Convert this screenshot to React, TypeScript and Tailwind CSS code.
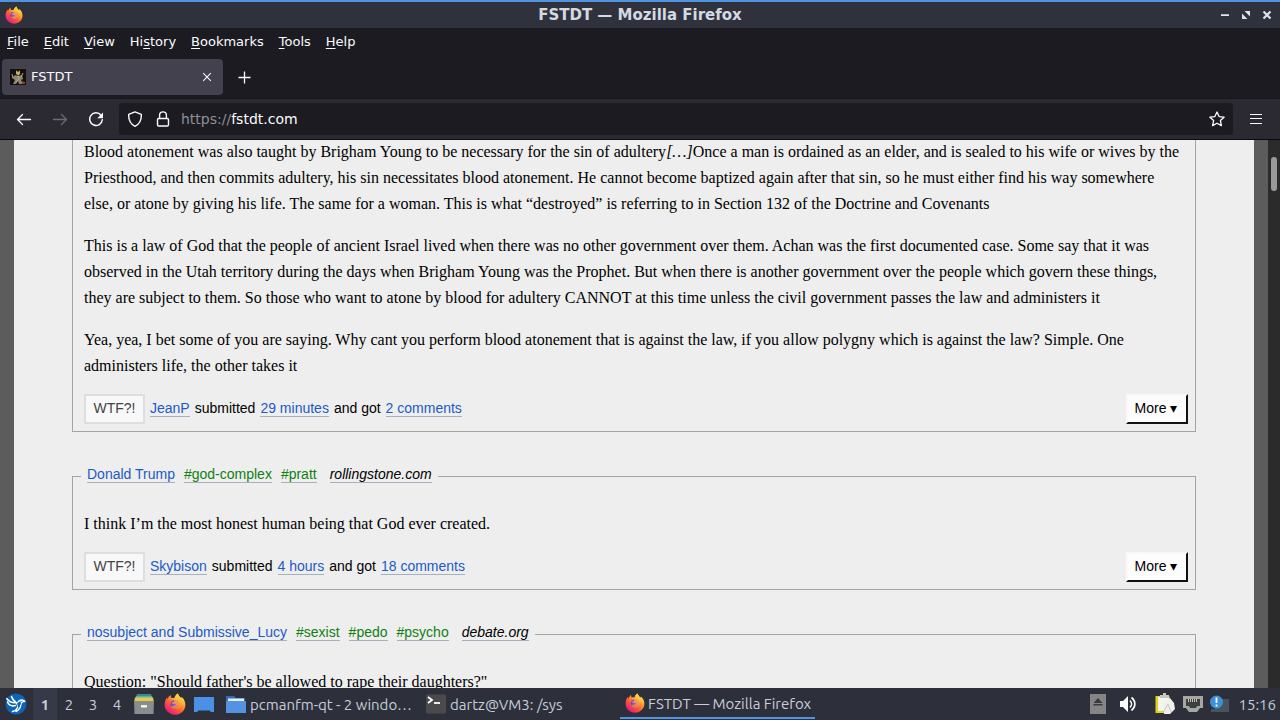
import { useId, type ReactNode } from "react";

type Tag = string;

interface Quote {
  author: string;
  tags: Tag[];
  source: string;
  body: ReactNode[];
  submitter: string;
  age: string;
  comments: string;
}

const quotes: Quote[] = [
  {
    author: "Donald Trump",
    tags: ["#god-complex", "#pratt"],
    source: "rollingstone.com",
    body: ["I think I’m the most honest human being that God ever created."],
    submitter: "Skybison",
    age: "4 hours",
    comments: "18 comments",
  },
];

const lastQuote = {
  author: "nosubject and Submissive_Lucy",
  tags: ["#sexist", "#pedo", "#psycho"],
  source: "debate.org",
  body: ["Question: \"Should father's be allowed to rape their daughters?\""],
};

function FirefoxIcon({ className }: { className: string }) {
  const id = useId();
  const outer = `${id}-outer`;
  const globe = `${id}-globe`;
  const flame = `${id}-flame`;
  return (
    <svg viewBox="0 0 24 24" className={className} aria-hidden="true">
      <defs>
        <linearGradient id={outer} x1="0.85" y1="0.1" x2="0.2" y2="0.95">
          <stop offset="0" stopColor="#fff44f" />
          <stop offset="0.3" stopColor="#ffa22b" />
          <stop offset="0.6" stopColor="#ff5a36" />
          <stop offset="1" stopColor="#e31587" />
        </linearGradient>
        <radialGradient id={globe} cx="0.5" cy="0.4" r="0.6">
          <stop offset="0" stopColor="#a05bf0" />
          <stop offset="1" stopColor="#5a3ac4" />
        </radialGradient>
        <linearGradient id={flame} x1="0.7" y1="0" x2="0.3" y2="1">
          <stop offset="0" stopColor="#ffe04a" />
          <stop offset="1" stopColor="#ff7a2e" />
        </linearGradient>
      </defs>
      <path
        d="M15.2 0.6c0.5 2.2 1.8 3.5 3.6 5 0.2-0.5 0.2-1 0.1-1.5 2.8 1.9 4.4 5.3 4.4 8.9 0 6-5 10.6-11.2 10.6S0.7 18.9 0.7 12.8c0-3.2 1.1-6.2 2.7-8.3 0 0.9 0.2 1.5 0.6 2 0.8-1.9 2-3.4 3.3-4.2-0.1 1.4 0.3 2.3 1 3.1 1.1-0.1 2.2 0 3.1 0.3 0.4-2 1.8-4.1 3.8-5.1z"
        fill={`url(#${outer})`}
      />
      <circle cx="12.2" cy="12.8" r="5.2" fill={`url(#${globe})`} />
      <path
        d="M15.2 0.6c0.5 2.2 2 3.6 3.5 5.3 1.9 2.2 2.3 5.2 1.1 7.800-0.200-1.400-0.700-2.400-1.500-3.200 0.500 4-1.900 7.200-5.400 7.400-3 0.200-5.300-1.700-5.600-4.200 1.300 0.900 2.600 0.800 3.700 0.200 1-0.600 1.600-0.700 2.200-0.800-0.300-1-1.400-1.500-2.900-1.300-0.900 0.100-1.800-0.200-2.100-0.900 1-1 2.200-1.200 3.100-1.900 0.200-0.600 0.100-0.900-0.200-1.100-1-0.500-1.900-0.900-2.800-2.500 1.100-0.100 2.200 0 3.100 0.300 0.400-2 1.800-4.100 3.800-5.100z"
        fill={`url(#${flame})`}
        opacity="0.85"
      />
    </svg>
  );
}

function TitleBar() {
  return (
    <header className="grid h-7 shrink-0 grid-cols-[1fr_auto_1fr] items-center border-t-2 border-[#5294e2] bg-[#2f323d] px-[5px]">
      <FirefoxIcon className="h-[18px] w-[18px] justify-self-start" />
      <h1 className="text-[15px] font-bold leading-5 text-[#d3dae3]">FSTDT — Mozilla Firefox</h1>
      <div className="flex items-center gap-1 justify-self-end text-[#dde2ee]">
        <button type="button" aria-label="Minimize" className="grid h-5 w-[17px] place-items-center">
          <svg viewBox="0 0 10 10" className="h-2.5 w-2.5">
            <path d="M1 4.200h8v1.800H1z" fill="currentColor" />
          </svg>
        </button>
        <button type="button" aria-label="Restore" className="grid h-5 w-[17px] place-items-center">
          <svg viewBox="0 0 10 10" className="h-2.5 w-2.5">
            <path d="M3.500 1H9v5.500zM1 3.500V9h5.500z" fill="currentColor" />
          </svg>
        </button>
        <button type="button" aria-label="Close window" className="grid h-5 w-[17px] place-items-center">
          <svg viewBox="0 0 10 10" className="h-2.5 w-2.5">
            <path d="M1.500 1.500l7 7M8.500 1.500l-7 7" stroke="currentColor" strokeWidth="2.200" />
          </svg>
        </button>
      </div>
    </header>
  );
}

const menus: [string, string, string][] = [
  ["", "F", "ile"],
  ["", "E", "dit"],
  ["", "V", "iew"],
  ["Hi", "s", "tory"],
  ["", "B", "ookmarks"],
  ["", "T", "ools"],
  ["", "H", "elp"],
];

function MenuBar() {
  return (
    <nav className="flex h-[27px] shrink-0 items-center gap-[15px] bg-[#1c1b22] pl-[7px] text-[13px] text-[#fbfbfe]">
      {menus.map(([before, key, after]) => (
        <button type="button" key={key + after}>
          {before}
          <span className="underline underline-offset-2">{key}</span>
          {after}
        </button>
      ))}
    </nav>
  );
}

function TabStrip() {
  return (
    <div className="flex h-[43px] shrink-0 items-center bg-[#1c1b22] pl-0.5 text-[#fbfbfe]">
      <div className="flex h-9 w-[221px] items-center rounded bg-[#42414d] px-2">
        <svg viewBox="0 0 16 16" className="h-4 w-4" aria-hidden="true">
          <path d="M0 0h16v16H0z" fill="#16100c" />
          <path d="M6 1l1 1.500h2L10 1v4L8.500 6.500 6 5z" fill="#c4ae62" />
          <path d="M5 6l3 1 4-1 1 4-2 1 2 4H9l-1-3-2 3H3l2-4-3-2z" fill="#8d8472" />
          <path d="M7 7l2 1-1 3-2 2M11 8l2-4M3 9L2 5" stroke="#b5ab90" fill="none" />
          <path d="M12 12l3 1v2h-3z" fill="#824432" />
        </svg>
        <span className="ml-[5px] flex-1 text-[13px]">FSTDT</span>
        <button type="button" aria-label="Close tab" className="grid h-4 w-4 place-items-center">
          <svg viewBox="0 0 16 16" className="h-4 w-4">
            <path d="M4.200 4.200l7.600 7.600M11.800 4.200l-7.600 7.600" stroke="currentColor" strokeWidth="1.100" />
          </svg>
        </button>
      </div>
      <button type="button" aria-label="New tab" className="ml-[13px] grid h-4 w-4 place-items-center">
        <svg viewBox="0 0 16 16" className="h-4 w-4">
          <path d="M8.500 2.500v12M2.500 8.500h12" stroke="currentColor" strokeWidth="1.300" />
        </svg>
      </button>
    </div>
  );
}

function NavBar() {
  return (
    <div className="flex h-[42px] shrink-0 items-center border-b border-t border-b-[#0c0c0d] border-t-[#17161c] bg-[#2b2a33] text-[#fbfbfe]">
      <div className="flex gap-5 pl-4">
        <button type="button" aria-label="Back">
          <svg viewBox="0 0 16 16" className="h-4 w-4" fill="none" stroke="currentColor" strokeWidth="1.300" strokeLinecap="round" strokeLinejoin="round">
            <path d="M14.500 8.500H1.500M6.500 3.500l-5 5 5 5" />
          </svg>
        </button>
        <button type="button" aria-label="Forward" disabled className="text-[#6b6a75]">
          <svg viewBox="0 0 16 16" className="h-4 w-4" fill="none" stroke="currentColor" strokeWidth="1.300" strokeLinecap="round" strokeLinejoin="round">
            <path d="M1.500 8.500h13M9.500 3.500l5 5-5 5" />
          </svg>
        </button>
        <button type="button" aria-label="Reload">
          <svg viewBox="0 0 16 16" className="h-4 w-4">
            <path d="M13 4.300A6.300 6.300 0 1 0 14.300 8.800" fill="none" stroke="currentColor" strokeWidth="1.500" strokeLinecap="round" />
            <path d="M15 1.500v5c0 0.400-0.300 0.700-0.700 0.700H9.300z" fill="currentColor" />
          </svg>
        </button>
      </div>
      <div className="ml-[15px] flex h-8 flex-1 items-center rounded bg-[#1c1b22] px-2">
        <svg viewBox="0 0 16 16" className="h-4 w-4" fill="none" stroke="currentColor" strokeWidth="1.400" strokeLinejoin="round" aria-hidden="true">
          <path d="M8 0.900l6.300 2.500c0.300 5.500-1.800 9.600-6.300 11.900C3.500 13 1.400 8.900 1.700 3.400z" />
        </svg>
        <svg viewBox="0 0 16 16" className="ml-3 h-4 w-4" fill="none" stroke="currentColor" strokeWidth="1.400" aria-hidden="true">
          <rect x="2.500" y="7.500" width="11" height="7.500" rx="1.200" />
          <path d="M4.600 7.300V4.300a3.400 3.400 0 0 1 6.800 0V7.300" />
        </svg>
        <a href="https://fstdt.com" className="ml-2.5 flex-1 text-[14px] leading-5">
          <span className="text-[#8f8f99]">https://</span>fstdt.com
        </a>
        <button type="button" aria-label="Bookmark this page">
          <svg viewBox="0 0 16 16" className="h-4 w-4" fill="none" stroke="currentColor" strokeWidth="1.300" strokeLinejoin="round">
            <path d="M8 1l2.100 4.600 5 0.600-3.700 3.400 1 5L8 12.200l-4.400 2.400 1-5L0.900 6.200l5-0.600z" />
          </svg>
        </button>
      </div>
      <button type="button" aria-label="Open application menu" className="ml-[15px] mr-4">
        <svg viewBox="0 0 16 16" className="h-4 w-4" stroke="currentColor" strokeWidth="1.200">
          <path d="M2 3.500h12M2 7.500h12M2 12.500h12" />
        </svg>
      </button>
    </div>
  );
}

function PageLink({ children, tone = "text-[#1b5ac8]" }: { children: ReactNode; tone?: string }) {
  return (
    <a href="#quote" className={`border-b border-[#a8b0bc] ${tone}`}>
      {children}
    </a>
  );
}

function QuoteFooter({ submitter, age, comments }: { submitter: string; age: string; comments: string }) {
  return (
    <footer className="flex h-[30px] items-center justify-between font-['Liberation_Sans',Arial,sans-serif] text-[14px] leading-4">
      <div className="flex items-center gap-[5px]">
        <button type="button" className="h-[30px] w-[61px] border-2 border-[#dedede] bg-[#f8f8f8] pb-0.5 text-[#444]">
          WTF?!
        </button>
        <div className="flex gap-[5px] pb-0.5">
          <PageLink>{submitter}</PageLink>
          <span>submitted</span>
          <PageLink>{age}</PageLink>
          <span>and got</span>
          <PageLink>{comments}</PageLink>
        </div>
      </div>
      <button
        type="button"
        className="h-[30px] w-[62px] border-2 border-b-[#111] border-l-[#f8f8f8] border-r-[#111] border-t-[#f8f8f8] bg-[#fcfcfc] pb-0.5 pr-0.5"
      >
        More ▾
      </button>
    </footer>
  );
}

function Paragraphs({ items }: { items: ReactNode[] }) {
  return (
    <div className="mb-[15px] flex flex-col gap-4 pr-1">
      {items.map((item, i) => (
        <p key={i}>{item}</p>
      ))}
    </div>
  );
}

function QuoteCard({ quote, children }: { quote: Pick<Quote, "author" | "tags" | "source" | "body">; children?: ReactNode }) {
  return (
    <fieldset className="border border-[#a3a3a3] pb-[7px] pl-[11px] pr-[7px]">
      <legend className="-ml-[3px] flex h-[26px] items-center gap-[9px] px-1.5 pb-1 font-['Liberation_Sans',Arial,sans-serif] text-[14px] leading-4">
        <PageLink>{quote.author}</PageLink>
        {quote.tags.map((tag) => (
          <PageLink key={tag} tone="text-[#118011]">
            {tag}
          </PageLink>
        ))}
        <span className="ml-1 italic">
          <PageLink tone="text-black">{quote.source}</PageLink>
        </span>
      </legend>
      <div className="pt-[22px]">
        <Paragraphs items={quote.body} />
      </div>
      {children}
    </fieldset>
  );
}

const longQuote: ReactNode[] = [
  <>
    Blood atonement was also taught by Brigham Young to be necessary for the sin of adultery<em>[…]</em>Once a man is
    ordained as an elder, and is sealed to his wife or wives by the Priesthood, and then commits adultery, his sin
    necessitates blood atonement. He cannot become baptized again after that sin, so he must either find his way
    somewhere else, or atone by giving his life. The same for a woman. This is what “destroyed” is referring to in
    Section 132 of the Doctrine and Covenants
  </>,
  "This is a law of God that the people of ancient Israel lived when there was no other government over them. Achan was the first documented case. Some say that it was observed in the Utah territory during the days when Brigham Young was the Prophet. But when there is another government over the people which govern these things, they are subject to them. So those who want to atone by blood for adultery CANNOT at this time unless the civil government passes the law and administers it",
  "Yea, yea, I bet some of you are saying. Why cant you perform blood atonement that is against the law, if you allow polygny which is against the law? Simple. One administers life, the other takes it",
];

function Page() {
  return (
    <div className="flex min-h-0 flex-1 bg-[#5c5c5c]">
      <main className="mx-3.5 flex-1 overflow-hidden bg-[#eeeeee] px-[58px] font-['Liberation_Serif','Times_New_Roman',serif] text-[16px] leading-[26px] text-black">
        <div className="-mt-px flex flex-col gap-[31px]">
          <article className="border-x border-b border-[#a3a3a3] pb-[7px] pl-[11px] pr-[7px]">
            <Paragraphs items={longQuote} />
            <QuoteFooter submitter="JeanP" age="29 minutes" comments="2 comments" />
          </article>
          {quotes.map((quote) => (
            <QuoteCard key={quote.author} quote={quote}>
              <QuoteFooter submitter={quote.submitter} age={quote.age} comments={quote.comments} />
            </QuoteCard>
          ))}
          <QuoteCard quote={lastQuote} />
        </div>
      </main>
      <div className="flex w-3 justify-center bg-[#2b2b2b] pt-[17px]">
        <div className="h-[34px] w-1.5 rounded-full bg-[#9a9a9a]" />
      </div>
    </div>
  );
}

function Taskbar() {
  return (
    <footer className="flex h-8 shrink-0 items-center bg-[#2d303b] font-['Ubuntu','Noto_Sans',sans-serif] text-[15px] leading-5 text-[#c6cedc]">
      <button type="button" aria-label="Start menu" className="ml-[5px]">
        <svg viewBox="0 0 22 22" className="h-[22px] w-[22px]">
          <circle cx="11" cy="11" r="10.500" fill="#0c63b8" />
          <path
            d="M1.800 5.500c2 3 5.200 4.300 9 4.200M6.500 3.500c0.800 3 3 4.800 5.200 6.500M2.500 9c1.500 3.200 4.500 4.500 8 3.500M11.500 10c1.300 1.500 1.800 3 1 4.800-0.900 2-2.500 3.200-5 3.800M12.500 10.500c1-2.500 3-3.800 5.500-3.200l1.800 1c-2.300 0.200-3.800 1-4 3.200-0.200 3-1.800 5.500-4.800 7"
            fill="none"
            stroke="#fff"
            strokeWidth="1.500"
            strokeLinecap="round"
            strokeLinejoin="round"
          />
          <path d="M12 10.500l2.500-2 1.500 2-2.500 4.500z" fill="#0c63b8" />
        </svg>
      </button>
      <div className="ml-[6px] flex">
        <button type="button" className="h-8 w-6 bg-[#363a48] pt-0.5 font-bold">1</button>
        <button type="button" className="h-8 w-6 pt-0.5">2</button>
        <button type="button" className="h-8 w-6 pt-0.5">3</button>
        <button type="button" className="h-8 w-6 pt-0.5">4</button>
      </div>
      <div className="ml-1 flex items-center gap-[9px]">
        <button type="button" aria-label="File manager">
          <svg viewBox="0 0 22 22" className="h-[22px] w-[22px]">
            <path d="M4 1h14l1 3H3z" fill="#2f8ca4" />
            <path d="M3 3h16l1 3H2z" fill="#6fae8a" />
            <path d="M2 4.500h18l1 5H1z" fill="#e2c955" />
            <path d="M1 8h20l-0.500 13h-19z" fill="#8b8d8c" />
            <path d="M8 12h6v2.500H8z" fill="#f2f2f2" />
          </svg>
        </button>
        <button type="button" aria-label="Firefox">
          <FirefoxIcon className="h-[22px] w-[22px]" />
        </button>
        <button type="button" aria-label="Show desktop" className="-ml-0.5">
          <svg viewBox="0 0 22 22" className="h-[22px] w-[22px]">
            <path d="M1 4h20v15h-3l-1.500-1.500h-11L4 19H1z" fill="#4a90e6" />
          </svg>
        </button>
      </div>
      <button type="button" className="ml-[11px] flex h-8 w-[200px] items-center gap-1">
        <svg viewBox="0 0 20 20" className="h-5 w-5 shrink-0" aria-hidden="true">
          <path d="M0 2h8l2 2h9v5H0z" fill="#376cb4" />
          <path d="M2 4.500h16V8H2z" fill="#e6eef8" />
          <path d="M0 7h20v12H0z" fill="#5294e2" />
        </svg>
        <span className="w-[163px] truncate pt-0.5 text-left">pcmanfm-qt - 2 windo…</span>
      </button>
      <button type="button" className="flex h-8 w-[194px] items-center gap-1">
        <svg viewBox="0 0 20 20" className="h-5 w-5 shrink-0" aria-hidden="true">
          <rect width="20" height="19" y="0.500" rx="1" fill="#4a4a4a" />
          <path d="M2 3l4 3-4 3" fill="none" stroke="#fff" strokeWidth="1.800" />
          <path d="M8 9h6" stroke="#fff" strokeWidth="1.800" />
        </svg>
        <span className="pt-0.5">dartz@VM3: /sys</span>
      </button>
      <button type="button" className="flex h-[30px] items-center gap-[3px] whitespace-nowrap border-b-2 border-[#5294e2] pl-[5px] pr-1">
        <FirefoxIcon className="h-5 w-5" />
        <span className="pt-0.5">FSTDT — Mozilla Firefox</span>
      </button>
      <div className="ml-auto flex items-center pr-1">
        <svg viewBox="0 0 16 20" className="h-5 w-4" aria-label="Removable media">
          <path d="M0 0h16v20H0z" fill="#858585" />
          <path d="M8 4l4.500 5h-9zM3.500 10h9v1.500h-9z" fill="#3b3b3b" />
        </svg>
        <svg viewBox="0 0 18 18" className="ml-[13px] h-[18px] w-[18px]" aria-label="Volume">
          <path d="M1 6h3l5-5v16l-5-5H1z" fill="#fff" />
          <path d="M11 5.500c2 2 2 5 0 7M12.500 2.500c4.500 3.500 4.500 9.500 0 13" fill="none" stroke="#fff" strokeWidth="1.600" />
        </svg>
        <svg viewBox="0 0 20 22" className="ml-[18px] h-[22px] w-5" aria-label="Clipboard">
          <path d="M0.500 3h14v17h-14z" fill="#e4d21e" />
          <path d="M3 4h11v14H3z" fill="#f5f5f0" />
          <path d="M5 2h3V0h3v2h3v3H5z" fill="#c5c7c5" />
          <path d="M8 10l7-5 4 5 1 6-5 5H9z" fill="#f1f1eb" />
          <path d="M8 20l5-9 3 8" fill="none" stroke="#c8c8bd" />
        </svg>
        <svg viewBox="0 0 20 18" className="ml-2 h-[18px] w-5" aria-label="Network">
          <path d="M0 1h20v12h-3l-3 4H6l-3-4H0z" fill="#a5a7a5" />
          <path d="M3 4h14v7h-3l-1 2H7l-1-2H3z" fill="#3e403d" />
          <path d="M5.500 4v3M7.500 4v3M9.500 4v3M11.500 4v3M13.500 4v3" stroke="#d7d8b8" strokeWidth="0.900" />
        </svg>
        <svg viewBox="0 0 20 18" className="ml-[7px] h-[18px] w-5" aria-label="Notification">
          <path d="M5 4h14v13H1v-3h4z" fill="#49535b" />
          <circle cx="6.500" cy="7" r="6.500" fill="#3e91d6" />
          <path d="M6.500 2.500V8M6.500 9.500v2" stroke="#fff" strokeWidth="1.800" />
        </svg>
        <time className="ml-2 pt-0.5">15:16</time>
      </div>
    </footer>
  );
}

export default function App() {
  return (
    <div className="flex h-screen flex-col overflow-hidden font-['DejaVu_Sans',sans-serif]">
      <TitleBar />
      <MenuBar />
      <TabStrip />
      <NavBar />
      <Page />
      <Taskbar />
    </div>
  );
}
